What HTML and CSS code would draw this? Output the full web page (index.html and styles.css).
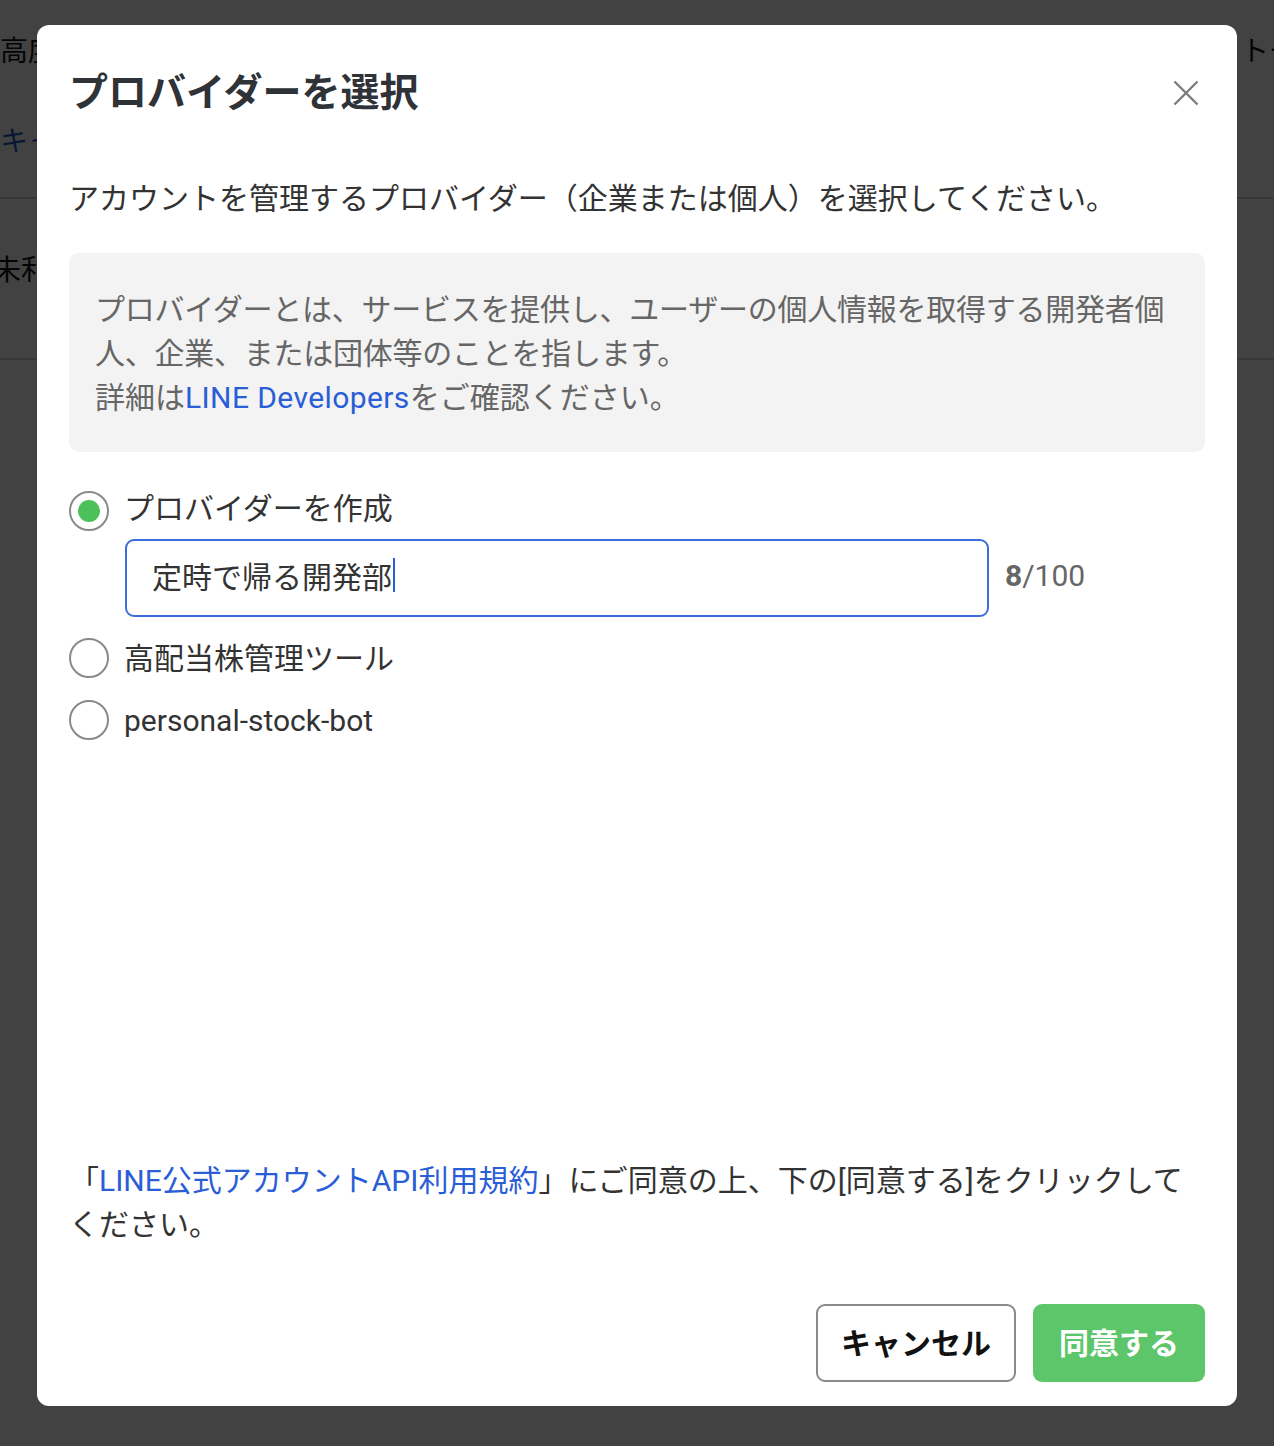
FILE: index.html
```html
<!DOCTYPE html>
<html lang="ja">
<head>
<meta charset="utf-8">
<title>プロバイダーを選択</title>
<link rel="stylesheet" href="styles.css">
</head>
<body>
<div class="page">
  <div class="page-row page-row-first">
    <div class="page-cells">
      <div class="page-left">
        <div class="page-text">高度な設定</div>
        <div class="page-link">キャンセル</div>
      </div>
      <div class="page-right">トーク設定</div>
    </div>
  </div>
  <div class="page-row page-row-second">
    <div class="page-text page-text-shift">未利用</div>
  </div>
</div>

<div class="overlay">
  <div class="modal" role="dialog" aria-labelledby="modal-title">
    <div class="modal-header">
      <h2 id="modal-title" class="modal-title">プロバイダーを選択</h2>
      <button class="close-btn" aria-label="閉じる">
        <svg width="26" height="26" viewBox="0 0 26 26"><path d="M1.5 1.5 L24.5 24.5 M24.5 1.5 L1.5 24.5" stroke="#7a7a7a" stroke-width="2.3" fill="none"/></svg>
      </button>
    </div>

    <p class="modal-desc">アカウントを管理するプロバイダー（企業または個人）を選択してください。</p>

    <div class="info-box">
      <span class="info-jp">プロバイダーとは、サービスを提供し、ユーザーの個人情報を取得する開発者個人、企業、または団体等のことを指します。</span><br>
      詳細は<a class="link" href="#">LINE Developers</a>をご確認ください。
    </div>

    <div class="options">
      <div class="option option-first">
        <span class="radio radio-checked"></span>
        <span class="option-label">プロバイダーを作成</span>
      </div>
      <div class="input-row">
        <div class="text-input">定時で帰る開発部<span class="caret"></span></div>
        <div class="counter"><b>8</b>/100</div>
      </div>
      <div class="option">
        <span class="radio"></span>
        <span class="option-label">高配当株管理ツール</span>
      </div>
      <div class="option">
        <span class="radio"></span>
        <span class="option-label">personal-stock-bot</span>
      </div>
    </div>

    <p class="terms">「<a class="link" href="#">LINE公式アカウントAPI利用規約</a>」にご同意の上、下の[同意する]をクリックして<br>ください。</p>

    <div class="actions">
      <button class="btn btn-cancel">キャンセル</button>
      <button class="btn btn-agree">同意する</button>
    </div>
  </div>
</div>
</body>
</html>
```

FILE: styles.css
```css
* { box-sizing: border-box; }

html, body {
  margin: 0;
  padding: 0;
  height: 100%;
}

body {
  background: #ffffff;
  font-family: Roboto, "Noto Sans CJK JP", "Noto Sans", sans-serif;
  color: #333333;
  overflow: hidden;
}

/* underlying page */
.page {
  width: 1274px;
}

.page-row {
  border-bottom: 2px solid #d4d4d4;
}

.page-row-first {
  height: 199px;
  padding-top: 30px;
}

.page-cells {
  display: flex;
}

.page-left {
  display: flex;
  flex-direction: column;
  gap: 46px;
}

.page-right {
  margin-left: auto;
  width: 33px;
  overflow: hidden;
  white-space: nowrap;
  font-size: 28px;
  line-height: 44px;
  color: #111;
}

.page-text {
  font-size: 28px;
  line-height: 44px;
  color: #111;
  white-space: nowrap;
}

.page-link {
  font-size: 28px;
  line-height: 44px;
  color: #2458c8;
  white-space: nowrap;
}

.page-row-second {
  height: 161px;
  padding-top: 50px;
}

.page-text-shift {
  text-indent: -7px;
}

/* overlay + modal */
.overlay {
  position: fixed;
  inset: 0;
  background: rgba(0, 0, 0, 0.74);
  padding: 25px 37px 40px 37px;
}

.modal {
  width: 1200px;
  height: 1381px;
  background: #ffffff;
  border-radius: 12px;
  padding: 0 32px 24px 32px;
  display: flex;
  flex-direction: column;
}

.modal-header {
  display: flex;
  align-items: center;
  justify-content: space-between;
  padding-top: 43px;
}

.modal-title {
  margin: 0;
  font-size: 39px;
  line-height: 50px;
  font-weight: 700;
  color: #2f3237;
}

.close-btn {
  width: 40px;
  height: 40px;
  border: none;
  background: none;
  padding: 0;
  display: flex;
  align-items: center;
  justify-content: center;
  margin-right: -1px;
  cursor: pointer;
}

.modal-desc {
  margin: 59px 0 0 0;
  font-size: 30px;
  line-height: 44px;
  color: #333333;
}

.info-box {
  margin-top: 32px;
  background: #f3f3f3;
  border-radius: 10px;
  padding: 35px 24px 32px 26px;
  font-size: 30px;
  line-height: 44px;
  color: #666666;
}

.info-jp {
  letter-spacing: -0.25px;
}

.link {
  color: #2a5ed6;
  text-decoration: none;
}

.info-box .link {
  letter-spacing: 0.4px;
}

.options {
  margin-top: 35px;
  display: flex;
  flex-direction: column;
}

.option {
  display: flex;
  align-items: center;
  gap: 15px;
  height: 44px;
}

.option + .option {
  margin-top: 18px;
}

.radio {
  width: 40px;
  height: 40px;
  border-radius: 50%;
  border: 2px solid #8a8a8a;
  display: flex;
  align-items: center;
  justify-content: center;
  flex: none;
  margin-top: 4px;
}

.radio-checked::after {
  content: "";
  width: 22px;
  height: 22px;
  border-radius: 50%;
  background: #4cc05a;
}

.option-label {
  font-size: 30px;
  line-height: 44px;
  color: #333333;
  padding-top: 6px;
}

.option-first .option-label {
  padding-top: 0;
}

.input-row {
  display: flex;
  align-items: center;
  gap: 16px;
  margin: 8px 0 17px 56px;
}

.text-input {
  width: 864px;
  height: 78px;
  border: 2px solid #3a6ed9;
  border-radius: 9px;
  padding: 0 26px 6px 25px;
  display: flex;
  align-items: center;
  font-size: 30px;
  color: #333333;
}

.caret {
  display: inline-block;
  width: 2px;
  height: 34px;
  background: #2a5ed6;
  margin-left: 1px;
}

.counter {
  font-size: 30px;
  color: #666666;
  padding-bottom: 6px;
}

.counter b {
  font-weight: 700;
}

.terms {
  margin: auto 0 0 0;
  font-size: 30px;
  line-height: 44px;
  color: #333333;
}

.actions {
  margin-top: 57px;
  display: flex;
  justify-content: flex-end;
  gap: 17px;
}

.btn {
  height: 78px;
  border-radius: 9px;
  font-family: Roboto, "Noto Sans CJK JP", "Noto Sans", sans-serif;
  font-size: 30px;
  font-weight: 700;
  cursor: pointer;
  padding: 0 0 4px 0;
}

.btn-cancel {
  width: 200px;
  background: #ffffff;
  border: 2px solid #8a8a8a;
  color: #111111;
}

.btn-agree {
  width: 172px;
  background: #5dc56a;
  border: none;
  color: #ffffff;
}
```
